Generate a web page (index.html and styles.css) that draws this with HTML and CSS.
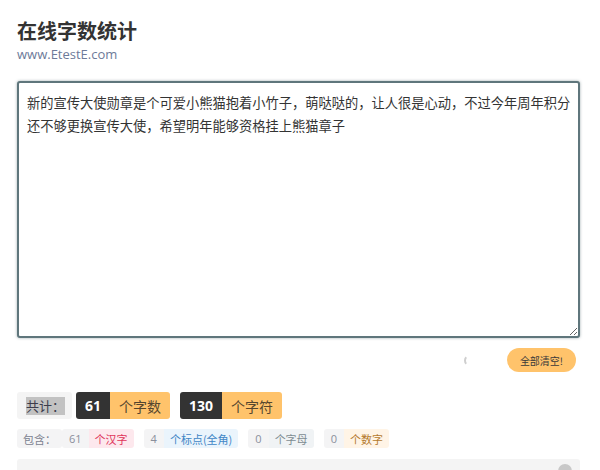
FILE: index.html
```html
<!DOCTYPE html>
<html lang="zh-CN">
<head>
    <meta charset="UTF-8">
    <title>在线字数统计</title>
    <link rel="stylesheet" href="styles.css">
</head>
<body>
    <div class="container">
        <h1>在线字数统计</h1>
        <div class="site">www.EtestE.com</div>
        <textarea id="content" class="content">新的宣传大使勋章是个可爱小熊猫抱着小竹子，萌哒哒的，让人很是心动，不过今年周年积分还不够更换宣传大使，希望明年能够资格挂上熊猫章子</textarea>
        <div class="actions">
            <span class="spinner"></span>
            <button class="clear-btn">全部清空!</button>
        </div>
        <div class="total">
            <span class="total-label"><span class="sel">共计：</span></span>
            <span class="pair"><b class="num">61</b><span class="unit">个字数</span></span>
            <span class="pair"><b class="num">130</b><span class="unit">个字符</span></span>
        </div>
        <div class="detail">
            <span class="tag plain">包含：</span>
            <span class="chip"><span class="cnt">61</span><span class="kind red">个汉字</span></span>
            <span class="chip"><span class="cnt">4</span><span class="kind blue">个标点(全角)</span></span>
            <span class="chip"><span class="cnt">0</span><span class="kind grey">个字母</span></span>
            <span class="chip"><span class="cnt">0</span><span class="kind orange">个数字</span></span>
        </div>
        <div class="result">
            <span class="dot"></span>
        </div>
    </div>
</body>
</html>
```

FILE: styles.css
```css
body {
    margin: 0;
    background-color: #ffffff;
    color: #333;
    font-family: "Noto Sans CJK SC", "Liberation Sans", sans-serif;
    overflow: hidden;
}
.container {
    padding: 17px 20px 0 17px;
}
h1 {
    margin: 0;
    font-size: 20px;
    line-height: 28px;
    font-weight: bold;
    color: #333;
}
.site {
    font-family: "Open Sans", "Liberation Sans", sans-serif;
    font-size: 13px;
    line-height: 18px;
    color: #6d7a99;
}
.content {
    display: block;
    box-sizing: border-box;
    width: 563px;
    height: 257px;
    margin-top: 18px;
    padding: 8px 4px 8px 8px;
    border: 2px solid #5f767c;
    border-radius: 3px;
    box-shadow: 0 0 3px rgba(95, 118, 124, 0.6);
    font-family: "Noto Sans CJK SC", sans-serif;
    font-size: 13.25px;
    line-height: 23px;
    color: #333;
    resize: vertical;
    outline: none;
}
.actions {
    width: 563px;
    margin-top: 10px;
    display: flex;
    justify-content: flex-end;
    align-items: center;
    gap: 32px;
}
.spinner {
    box-sizing: border-box;
    width: 11px;
    height: 11px;
    border-radius: 50%;
    border: 2px solid transparent;
    border-left-color: #cfcfcf;
    margin-top: 1px;
}
.clear-btn {
    height: 24px;
    width: 69px;
    margin-right: 4px;
    padding: 0;
    border: none;
    border-radius: 12px;
    background-color: #ffc36b;
    color: #3a3a3a;
    font-family: "Noto Sans CJK SC", sans-serif;
    font-size: 10px;
    cursor: pointer;
}
.total {
    margin-top: 20px;
    display: flex;
    gap: 10px;
    height: 27px;
}
.total-label {
    display: flex;
    align-items: center;
    padding: 0 7px 0 9px;
    margin-right: -6px;
    background-color: #f4f4f4;
    border-radius: 3px;
    font-size: 13px;
}
.total-label .sel {
    background-color: #c2c2c2;
    color: #3c3c4c;
    line-height: 18px;
}
.pair {
    display: flex;
    border-radius: 3px;
    overflow: hidden;
    font-size: 14px;
}
.pair .num {
    display: flex;
    align-items: center;
    padding: 0 9px;
    background-color: #333;
    color: #fff;
    font-family: "Open Sans", "Liberation Sans", sans-serif;
    font-size: 14px;
}
.pair .unit {
    display: flex;
    align-items: center;
    padding: 0 9px;
    background-color: #ffc36b;
    color: #55462e;
}
.detail {
    margin-top: 10px;
    display: flex;
    gap: 10px;
    height: 19px;
    font-size: 11px;
}
.tag.plain {
    display: flex;
    align-items: center;
    padding: 0 6px;
    margin-right: -10px;
    background-color: #f4f4f5;
    border-radius: 3px;
    color: #7c8290;
}
.chip {
    display: flex;
    border-radius: 3px;
    overflow: hidden;
}
.chip .cnt {
    display: flex;
    align-items: center;
    padding: 0 7px;
    background-color: #f4f4f5;
    color: #8a8f9c;
    font-family: "Open Sans", "Liberation Sans", sans-serif;
}
.chip .kind {
    display: flex;
    align-items: center;
    padding: 0 6px;
}
.kind.red {
    background-color: #fde8ed;
    color: #e0345a;
}
.kind.blue {
    background-color: #eaf4fc;
    color: #3f86c6;
}
.kind.grey {
    background-color: #f0f3f5;
    color: #7d8c92;
}
.kind.orange {
    background-color: #fff4e6;
    color: #b57a2e;
}
.result {
    position: relative;
    margin-top: 11px;
    width: 563px;
    height: 40px;
    background-color: #f4f4f4;
    border-radius: 3px;
}
.result .dot {
    position: absolute;
    right: 8px;
    top: 5px;
    width: 14px;
    height: 14px;
    border-radius: 50%;
    background-color: #c8c8c8;
}
```
